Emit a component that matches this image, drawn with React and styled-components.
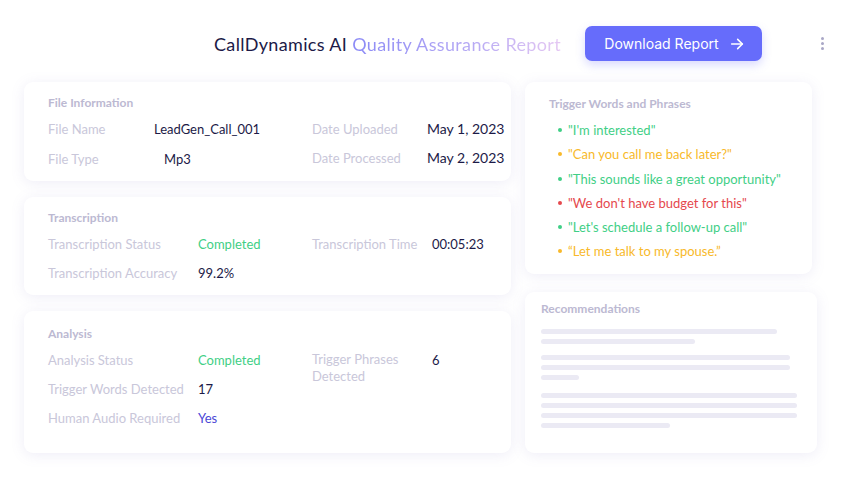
import React from 'react'
import styled, { createGlobalStyle } from 'styled-components'

const GlobalStyle = createGlobalStyle`
  html, body {
    margin: 0;
    padding: 0;
    background: #ffffff;
    font-family: 'Lato', 'Noto Sans', sans-serif;
  }
`

const fileRows = [
  { label: 'File Name', value: 'LeadGen_Call_001', indent: 0 },
  { label: 'File Type', value: 'Mp3', indent: 10 },
]

const fileDates = [
  { label: 'Date Uploaded', value: 'May 1, 2023' },
  { label: 'Date Processed', value: 'May 2, 2023' },
]

const triggers = [
  { text: '"I\'m interested"', tone: 'green' },
  { text: '"Can you call me back later?"', tone: 'amber' },
  { text: '"This sounds like a great opportunity"', tone: 'green' },
  { text: '"We don\'t have budget for this"', tone: 'red' },
  { text: '"Let\'s schedule a follow-up call"', tone: 'green' },
  { text: '\u201CLet me talk to my spouse.\u201D', tone: 'amber' },
]

const skeleton = [
  [236, 154],
  [249, 249, 38],
  [256, 256, 256, 129],
]

const tones = {
  green: '#3fcf86',
  amber: '#f8b92a',
  red: '#e5484d',
  blue: '#4b48d6',
  dark: '#1c1a47',
}

function ArrowIcon() {
  return (
    <svg width="16" height="16" viewBox="0 0 24 24" fill="none" stroke="currentColor" strokeWidth="2.4" strokeLinecap="round" strokeLinejoin="round">
      <path d="M4 12h16" />
      <path d="M13 5l7 7-7 7" />
    </svg>
  )
}

function App() {
  return (
    <Page>
      <GlobalStyle />
      <Header>
        <Title>
          CallDynamics AI <Accent>Quality Assurance Report</Accent>
        </Title>
        <DownloadButton>
          Download Report
          <ArrowIcon />
        </DownloadButton>
        <Kebab>
          <span />
          <span />
          <span />
        </Kebab>
      </Header>

      <Main>
        <Column>
          <Card>
            <CardTitle>File Information</CardTitle>
            <Split>
              <Pairs labelWidth={106} rowGap={10}>
                {fileRows.map((r) => (
                  <React.Fragment key={r.label}>
                    <Label>{r.label}</Label>
                    <Value indent={r.indent}>{r.value}</Value>
                  </React.Fragment>
                ))}
              </Pairs>
              <Pairs labelWidth={115} rowGap={8}>
                {fileDates.map((r) => (
                  <React.Fragment key={r.label}>
                    <Label>{r.label}</Label>
                    <Value size={14}>{r.value}</Value>
                  </React.Fragment>
                ))}
              </Pairs>
            </Split>
          </Card>

          <Card>
            <CardTitle>Transcription</CardTitle>
            <Split>
              <Pairs labelWidth={150} rowGap={9}>
                <Label>Transcription Status</Label>
                <Value tone="green">Completed</Value>
                <Label>Transcription Accuracy</Label>
                <Value>99.2%</Value>
              </Pairs>
              <Pairs labelWidth={120} rowGap={9}>
                <Label>Transcription Time</Label>
                <Value>00:05:23</Value>
              </Pairs>
            </Split>
          </Card>

          <Card grow>
            <CardTitle>Analysis</CardTitle>
            <Split>
              <Pairs labelWidth={150} rowGap={9}>
                <Label>Analysis Status</Label>
                <Value tone="green">Completed</Value>
                <Label>Trigger Words Detected</Label>
                <Value>17</Value>
                <Label>Human Audio Required</Label>
                <Value tone="blue">Yes</Value>
              </Pairs>
              <Pairs labelWidth={120} rowGap={9}>
                <Label wrap>Trigger Phrases Detected</Label>
                <Value>6</Value>
              </Pairs>
            </Split>
          </Card>
        </Column>

        <Column narrow>
          <SideCard>
            <CardTitle>Trigger Words and Phrases</CardTitle>
            <TriggerList>
              {triggers.map((t) => (
                <TriggerItem key={t.text} tone={t.tone}>
                  {t.text}
                </TriggerItem>
              ))}
            </TriggerList>
          </SideCard>

          <RecCard>
            <CardTitle>Recommendations</CardTitle>
            <SkeletonGroups>
              {skeleton.map((group, gi) => (
                <SkeletonGroup key={gi}>
                  {group.map((w, i) => (
                    <Bar key={i} style={{ width: w }} />
                  ))}
                </SkeletonGroup>
              ))}
            </SkeletonGroups>
          </RecCard>
        </Column>
      </Main>
    </Page>
  )
}

const Page = styled.div`
  width: 850px;
  height: 488px;
  box-sizing: border-box;
  padding: 26px 0 0 24px;
  background: #ffffff;
`

const Header = styled.header`
  display: flex;
  align-items: center;
  height: 35px;
  padding-left: 190px;
`

const Title = styled.h1`
  margin: 0;
  font-size: 18px;
  font-weight: 400;
  color: #1c1a47;
  white-space: nowrap;
  letter-spacing: 0.35px;
`

const Accent = styled.span`
  background: linear-gradient(90deg, #8b8af6 0%, #b4a8f4 55%, #e5c8f3 100%);
  -webkit-background-clip: text;
  background-clip: text;
  color: transparent;
`

const DownloadButton = styled.button`
  margin-left: 24px;
  width: 177px;
  height: 35px;
  padding: 0 0 0 2px;
  border: none;
  border-radius: 7px;
  background: #666cfb;
  color: #ffffff;
  font-family: 'Inter', sans-serif;
  font-size: 14px;
  font-weight: 400;
  display: flex;
  align-items: center;
  justify-content: center;
  gap: 10px;
  box-shadow: 0 4px 10px rgba(102, 108, 251, 0.25);
  cursor: pointer;
`

const Kebab = styled.div`
  margin-left: 59px;
  display: flex;
  flex-direction: column;
  gap: 2px;

  span {
    width: 3px;
    height: 3px;
    border-radius: 50%;
    background: #a9a7c6;
  }
`

const Main = styled.main`
  display: flex;
  gap: 14px;
  margin-top: 21px;
  height: 371px;
`

const Column = styled.div`
  display: flex;
  flex-direction: column;
  gap: 16px;
  width: ${(p) => (p.narrow ? '292px' : '487px')};
`

const Card = styled.section`
  background: #ffffff;
  border-radius: 9px;
  box-shadow: 0 2px 14px rgba(120, 115, 190, 0.13);
  padding: 13px 24px 12px;
  ${(p) => p.grow && 'flex: 1; padding-top: 15px;'}
`

const SideCard = styled(Card)`
  width: 287px;
  box-sizing: border-box;
  height: 192px;
  padding: 14px 24px;
`

const RecCard = styled(Card)`
  flex: 1;
  padding: 9px 17px 9px 16px;
  box-sizing: border-box;
  margin-top: 2px;
`

const CardTitle = styled.h2`
  margin: 0 0 8px;
  font-size: 12px;
  line-height: 16px;
  font-weight: 700;
  color: #bcb9d2;
`

const Split = styled.div`
  display: flex;
`

const Pairs = styled.div`
  display: grid;
  grid-template-columns: ${(p) => p.labelWidth}px auto;
  row-gap: ${(p) => p.rowGap}px;
  align-items: start;

  &:first-child {
    width: 264px;
    flex-shrink: 0;
  }
`

const Label = styled.span`
  font-size: 13px;
  line-height: 20px;
  color: #c9c7da;
  white-space: ${(p) => (p.wrap ? 'normal' : 'nowrap')};
  ${(p) => p.wrap && 'width: 100px; line-height: 17px; margin-top: 1px;'}
`

const Value = styled.span`
  font-size: ${(p) => p.size || 13}px;
  line-height: 20px;
  color: ${(p) => tones[p.tone] || tones.dark};
  padding-left: ${(p) => p.indent || 0}px;
  white-space: nowrap;
`

const TriggerList = styled.ul`
  margin: 6px 0 0;
  padding: 0 0 0 9px;
  list-style: none;
  display: flex;
  flex-direction: column;
  gap: 4.25px;
`

const TriggerItem = styled.li`
  display: flex;
  align-items: center;
  gap: 6px;
  font-size: 13px;
  line-height: 20px;
  color: ${(p) => tones[p.tone]};

  &::before {
    content: '';
    width: 4px;
    height: 4px;
    border-radius: 50%;
    background: ${(p) => tones[p.tone]};
  }
`

const SkeletonGroups = styled.div`
  display: flex;
  flex-direction: column;
  gap: 11px;
  margin-top: 12px;
`

const SkeletonGroup = styled.div`
  display: flex;
  flex-direction: column;
  gap: 5px;

  &:last-child {
    margin-top: 2px;
  }
`

const Bar = styled.div`
  height: 5px;
  border-radius: 3px;
  background: #ebeaf4;
`

export default App
